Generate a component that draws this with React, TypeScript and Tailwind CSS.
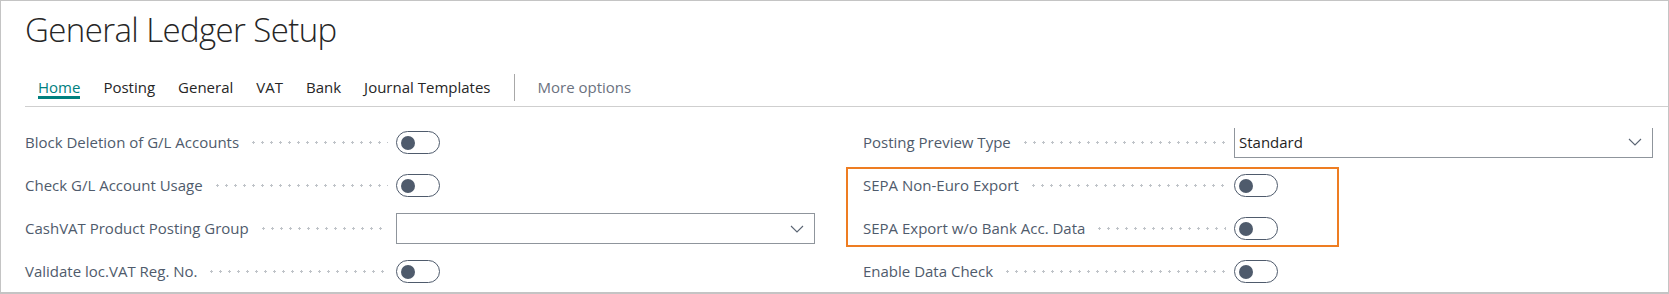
import React from 'react';

const font = { fontFamily: '"Open Sans", "Noto Sans", sans-serif' };

const tabs = ['Home', 'Posting', 'General', 'VAT', 'Bank', 'Journal Templates'];

const Toggle = () => (
  <div className="flex h-[23px] w-[44px] items-center rounded-full border-[1.5px] border-[#4f5b6c] pl-[4px]">
    <div className="h-[14px] w-[14px] rounded-full bg-[#4f5b6c]" />
  </div>
);

const Chevron = () => (
  <svg width="14" height="8" viewBox="0 0 14 8" fill="none">
    <path d="M1 1l6 6 6-6" stroke="#5a6473" strokeWidth="1.1" />
  </svg>
);

const Field = ({ label, children }: { label: string; children: React.ReactNode }) => (
  <div className="flex h-[43px] items-center">
    <div className="flex w-[371px] items-center pr-[8px]">
      <span className="whitespace-nowrap text-[15px] text-[#4f5b6c]">{label}</span>
      <div className="ml-[10px] h-[3px] flex-1 bg-[radial-gradient(circle,#bfc3c8_1px,transparent_1.3px)] bg-[length:9px_3px] bg-repeat-x" />
    </div>
    <div className="w-[419px]">{children}</div>
  </div>
);

export default function App() {
  return (
    <div className="h-[294px] w-[1669px] overflow-hidden bg-white" style={font}>
      <div className="h-full w-full border border-[#c4c4c4] border-b-[2px]">
        <div className="pl-[24px] pt-[5px]">
          <h1 className="text-[33px] font-light leading-[48px] tracking-[-0.6px] text-[#262626]">General Ledger Setup</h1>
        </div>
        <div className="ml-[24px] mt-[15px] flex h-[38px] items-center border-b border-[#cfcfcf] pl-[13px] text-[15px] text-[#262626]">
          {tabs.map((t, i) => (
            <div key={t} className="relative mr-[23px] flex h-full items-center">
              <span className={i === 0 ? 'text-[#00807f]' : ''}>{t}</span>
              {i === 0 && <div className="absolute bottom-[7px] left-0 right-0 h-[3px] bg-[#00807f]" />}
            </div>
          ))}
          <div className="mr-[23px] h-[27px] w-px bg-[#a8a8a8]" />
          <span className="text-[#6b7280]">More options</span>
        </div>
        <div className="flex pl-[24px] pt-[14px]">
          <div className="w-[838px]">
            <Field label="Block Deletion of G/L Accounts">
              <Toggle />
            </Field>
            <Field label="Check G/L Account Usage">
              <Toggle />
            </Field>
            <Field label="CashVAT Product Posting Group">
              <div className="flex h-[31px] w-full items-center justify-end border border-[#8f959c] pr-[10px]">
                <Chevron />
              </div>
            </Field>
            <Field label="Validate loc.VAT Reg. No.">
              <Toggle />
            </Field>
          </div>
          <div>
            <Field label="Posting Preview Type">
              <div className="flex h-[30px] w-full items-center justify-between border-x border-b border-[#8f959c] pl-[4px] pr-[10px]">
                <span className="text-[15px] text-[#1f1f1f]">Standard</span>
                <Chevron />
              </div>
            </Field>
            <div className="relative">
              <Field label="SEPA Non-Euro Export">
                <Toggle />
              </Field>
              <Field label="SEPA Export w/o Bank Acc. Data">
                <Toggle />
              </Field>
              <div className="pointer-events-none absolute bottom-[3px] left-[-17px] top-[3px] w-[493px] border-2 border-[#ee7d22]" />
            </div>
            <Field label="Enable Data Check">
              <Toggle />
            </Field>
          </div>
        </div>
      </div>
    </div>
  );
}
